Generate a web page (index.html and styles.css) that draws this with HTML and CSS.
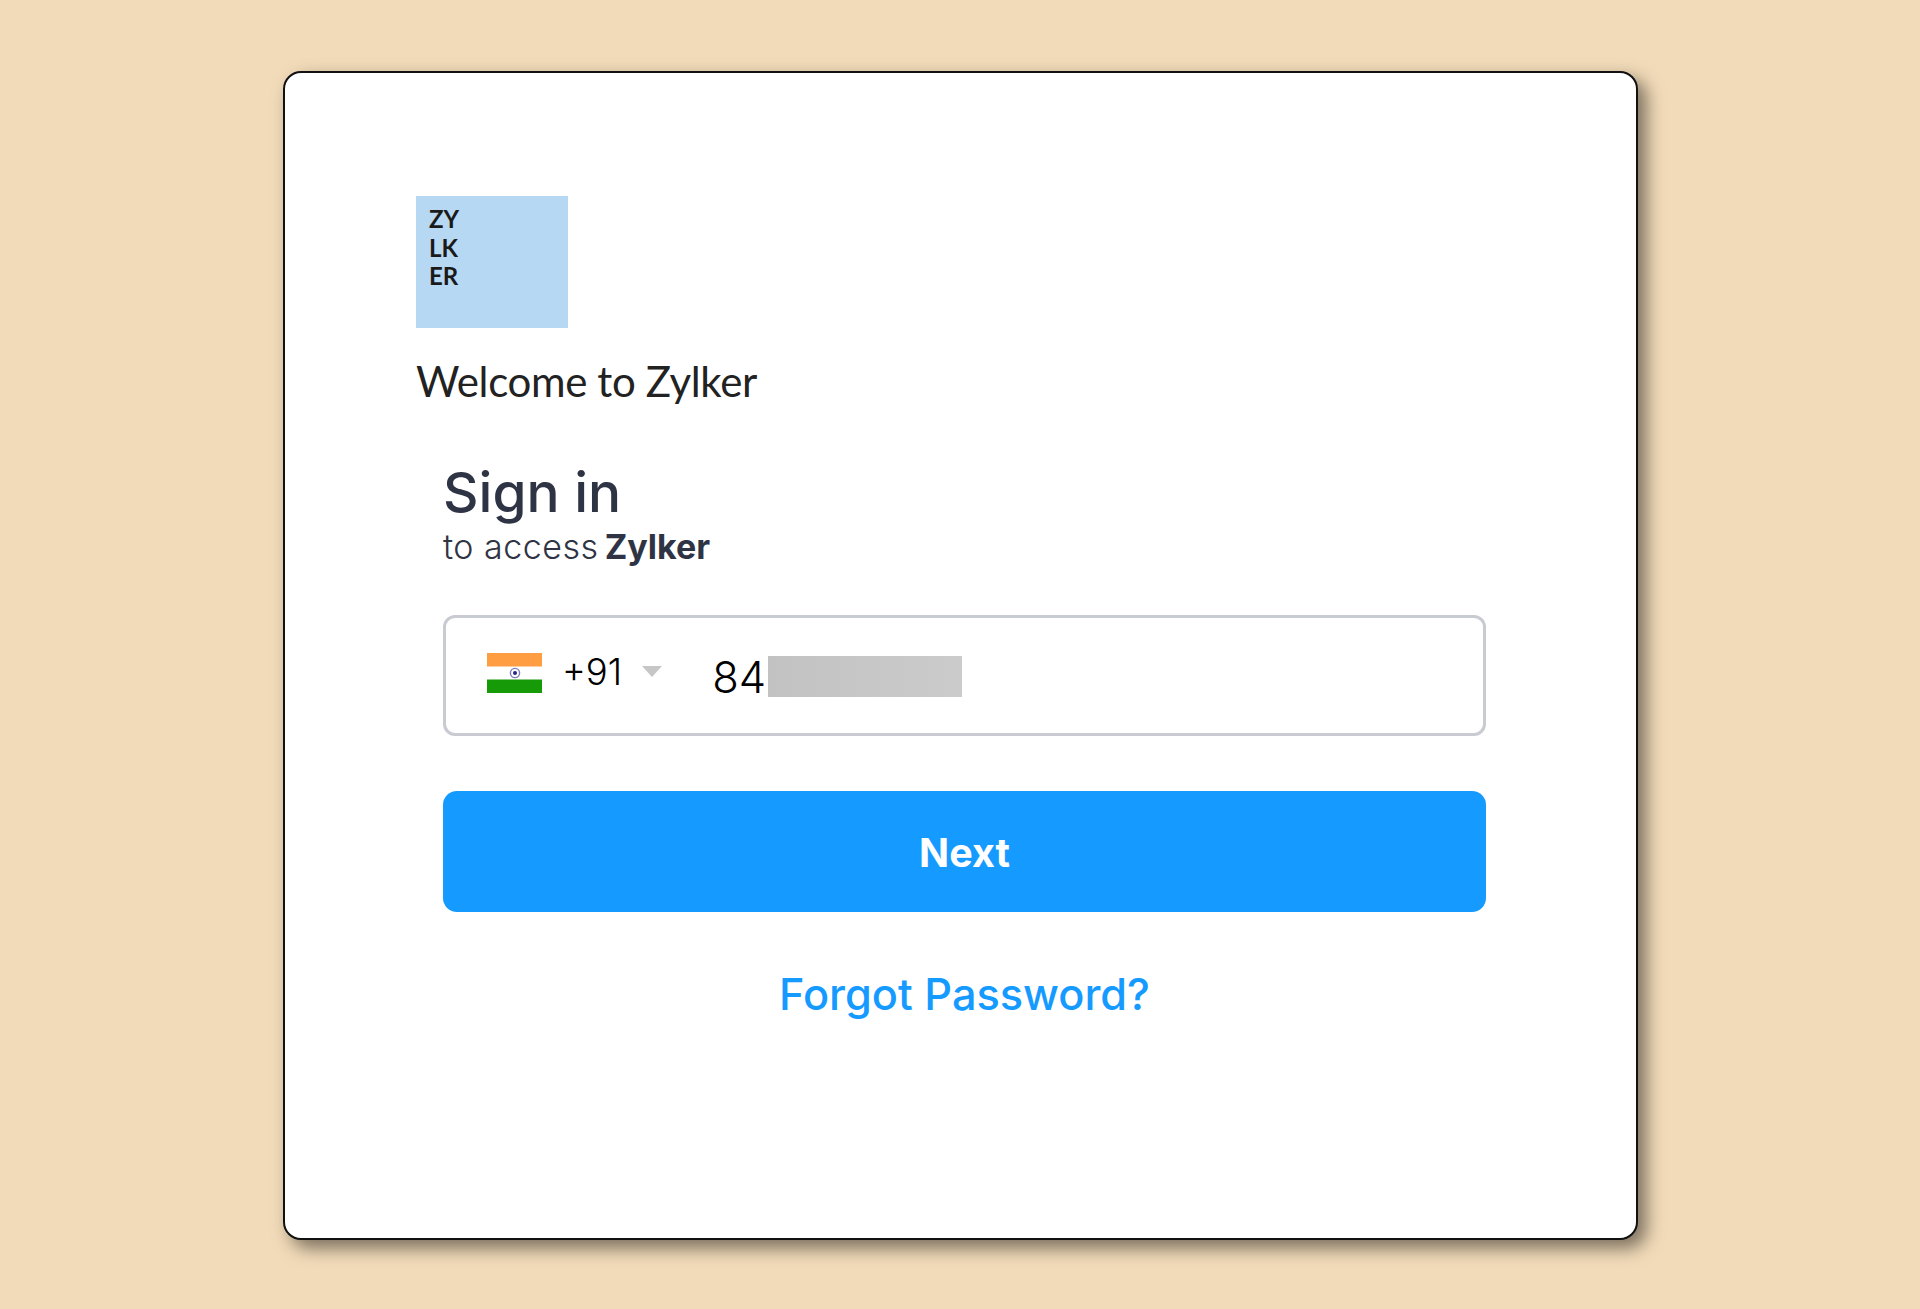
FILE: index.html
```html
<!DOCTYPE html>
<html lang="en">
<head>
    <meta charset="UTF-8">
    <title>Zylker - Sign in</title>
    <link rel="stylesheet" href="styles.css">
</head>
<body>
    <div class="card">
        <div class="logo">ZY<br>LK<br>ER</div>
        <div class="welcome">Welcome to Zylker</div>

        <div class="signin">
            <h1>Sign in</h1>
            <div class="sub">to access <b>Zylker</b></div>

            <div class="phone-box">
                <svg class="flag" width="55" height="40" viewBox="0 0 55 40">
                    <rect width="55" height="40" fill="#fff"/>
                    <rect width="55" height="13.5" fill="#ff9d42"/>
                    <rect y="26.5" width="55" height="13.5" fill="#179a07"/>
                    <circle cx="28" cy="20" r="4.6" fill="#fff" stroke="#7d7cc0" stroke-width="1.4"/>
                    <circle cx="28" cy="20" r="2" fill="#26268a"/>
                </svg>
                <span class="code">+91</span>
                <span class="caret"></span>
                <span class="number">84</span>
                <span class="mask"></span>
            </div>

            <button class="next">Next</button>
            <a class="forgot" href="#">Forgot Password?</a>
        </div>
    </div>
</body>
</html>
```

FILE: styles.css
```css
* {
    box-sizing: border-box;
}
body {
    margin: 0;
    height: 1309px;
    background: #f2dbb9;
    padding: 71px 0 0 283px;
    overflow: hidden;
}
.card {
    width: 1355px;
    height: 1169px;
    background: #fff;
    border: 2px solid #111;
    border-radius: 18px;
    box-shadow: 8px 8px 18px rgba(0, 0, 0, 0.5);
    padding: 123px 0 0 131px;
}
.logo {
    width: 152px;
    height: 132px;
    background: #b7d8f2;
    padding: 9px 13px;
    font-family: Lato, sans-serif;
    font-size: 24px;
    font-weight: 700;
    line-height: 28.5px;
    color: #1a1a1a;
}
.welcome {
    margin-top: 28px;
    font-family: Lato, sans-serif;
    font-size: 42px;
    font-weight: 400;
    line-height: 50px;
    letter-spacing: -0.35px;
    color: #222;
}
.signin {
    width: 1043px;
    margin-left: 27px;
    margin-top: 54px;
    font-family: Inter, sans-serif;
    color: #2f3444;
}
h1 {
    margin: 0;
    font-size: 55px;
    font-weight: 500;
    line-height: 64px;
}
.sub {
    font-size: 34px;
    line-height: 40px;
    margin-top: 2.5px;
    font-weight: 300;
    letter-spacing: 0.5px;
}
.sub b {
    margin-left: -4px;
    font-size: 34px;
    font-weight: 700;
    letter-spacing: 0;
}
.phone-box {
    display: flex;
    align-items: flex-start;
    width: 100%;
    height: 121px;
    margin-top: 48px;
    padding: 35px 0 0 41px;
    border: 3px solid #c8cbd2;
    border-radius: 12px;
}
.code {
    margin: -6px 0 0 20px;
    font-size: 36.5px;
    font-weight: 300;
    line-height: 50px;
    color: #000;
}
.caret {
    width: 0;
    height: 0;
    margin: 13px 0 0 20px;
    border-left: 10px solid transparent;
    border-right: 10px solid transparent;
    border-top: 11px solid #c6c6c6;
}
.number {
    margin: -2px 0 0 50px;
    font-size: 43.5px;
    font-weight: 300;
    line-height: 52px;
    color: #000;
}
.mask {
    width: 194px;
    height: 41px;
    margin: 3px 0 0 2px;
    background: linear-gradient(90deg, #c2c2c2, #cbcbcb);
}
.next {
    display: block;
    width: 100%;
    height: 121px;
    margin-top: 55px;
    padding-top: 5px;
    background: #159aff;
    border: none;
    border-radius: 14px;
    color: #fff;
    font-family: Inter, sans-serif;
    font-size: 39.5px;
    font-weight: 700;
}
.forgot {
    display: block;
    margin-top: 52px;
    text-align: center;
    font-size: 43.3px;
    font-weight: 500;
    line-height: 60px;
    color: #159aff;
    text-decoration: none;
}
```
